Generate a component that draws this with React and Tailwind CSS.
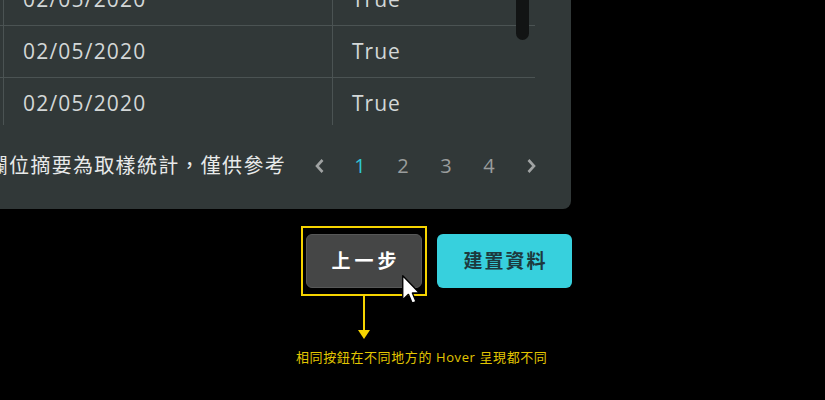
import React from "react";

const rows = [
  { date: "02/05/2020", flag: "True" },
  { date: "02/05/2020", flag: "True" },
  { date: "02/05/2020", flag: "True" },
];

const font = { fontFamily: '"Open Sans", "Noto Sans CJK TC", sans-serif' };

function Cursor() {
  return (
    <svg className="absolute left-[99px] top-[47px]" width="18" height="30" viewBox="0 0 12 20">
      <path d="M0.5 0.5 L0.5 16.5 L4.3 12.9 L6.8 18.8 L9.3 17.7 L6.9 12 L11.6 12 Z" fill="#fff" stroke="#000" strokeWidth="0.9" strokeLinejoin="round" />
    </svg>
  );
}

export default function App() {
  return (
    <div className="w-[825px] h-[400px] bg-black overflow-hidden text-[#d3d7d7]" style={font}>
      {/* table panel */}
      <div className="relative -ml-[120px] -mt-[26px] w-[691px] h-[235px] bg-[#313838] rounded-br-lg flex flex-col">
        <div className="h-[151px] w-[655px] overflow-hidden">
          {rows.map((r, i) => (
            <div key={i} className={`flex h-[52px] ${i < rows.length - 1 ? "border-b border-[#4b5353]" : ""}`}>
              <div className="w-[124px] border-r border-[#4b5353]" />
              <div className="w-[329px] border-r border-[#4b5353] flex items-center pl-[19px] text-[21px] tracking-[1.2px]">
                {r.date}
              </div>
              <div className="flex-1 flex items-center pl-[19px] text-[21px] tracking-[1px]">{r.flag}</div>
            </div>
          ))}
        </div>
        {/* scrollbar thumb */}
        <div className="absolute left-[636px] top-0 w-[13px] h-[66px] bg-[#121414] rounded-b-full" />

        <div className="flex-1 flex items-center justify-end pr-[30px] pb-[2px]">
          <span className="text-[20px] tracking-[1.3px] text-[#e8eaea] whitespace-nowrap">欄位摘要為取樣統計，僅供參考</span>
          <div className="flex items-center ml-[24px] text-[20px] text-[#9a9d9d]">
            <svg width="20" height="20" viewBox="0 0 20 20" className="w-[20px]">
              <path d="M12.5 4 L7 10 L12.5 16" fill="none" stroke="#a0a3a3" strokeWidth="2.6" />
            </svg>
            <div className="flex ml-[20px] gap-[23px]">
              <span className="w-[20px] text-center text-[#2fc6d6]">1</span>
              <span className="w-[20px] text-center">2</span>
              <span className="w-[20px] text-center">3</span>
              <span className="w-[20px] text-center">4</span>
            </div>
            <svg width="20" height="20" viewBox="0 0 20 20" className="ml-[22px] w-[20px]">
              <path d="M7.5 4 L13 10 L7.5 16" fill="none" stroke="#a0a3a3" strokeWidth="2.6" />
            </svg>
          </div>
        </div>
      </div>

      {/* buttons */}
      <div className="w-[572px] flex justify-end items-center gap-[10px] mt-[17px]">
        <div className="relative border-2 border-[#f6d400] px-[3px] py-[6px]">
          <button className="w-[116px] h-[54px] rounded-md bg-[#454646] border border-[#575858] text-white text-[19px] font-bold tracking-[4px] pl-[4px]">
            上一步
          </button>
          <Cursor />
        </div>
        <button className="w-[135px] h-[54px] rounded-md bg-[#37d0dd] text-[#1d3a3e] text-[19px] font-bold tracking-[2px] pl-[2px]">
          建置資料
        </button>
      </div>

      {/* annotation */}
      <div className="flex flex-col">
        <div className="ml-[363px] w-[2px] h-[34px] bg-[#f6d400]" />
        <svg width="12" height="9" viewBox="0 0 12 9" className="ml-[358px]">
          <path d="M0 0 L12 0 L6 9 Z" fill="#f6d400" />
        </svg>
        <div className="ml-[296px] mt-[11px] text-[13px] leading-[15px] tracking-[0.6px] text-[#e2c600] whitespace-nowrap">
          相同按鈕在不同地方的 Hover 呈現都不同
        </div>
      </div>
    </div>
  );
}
